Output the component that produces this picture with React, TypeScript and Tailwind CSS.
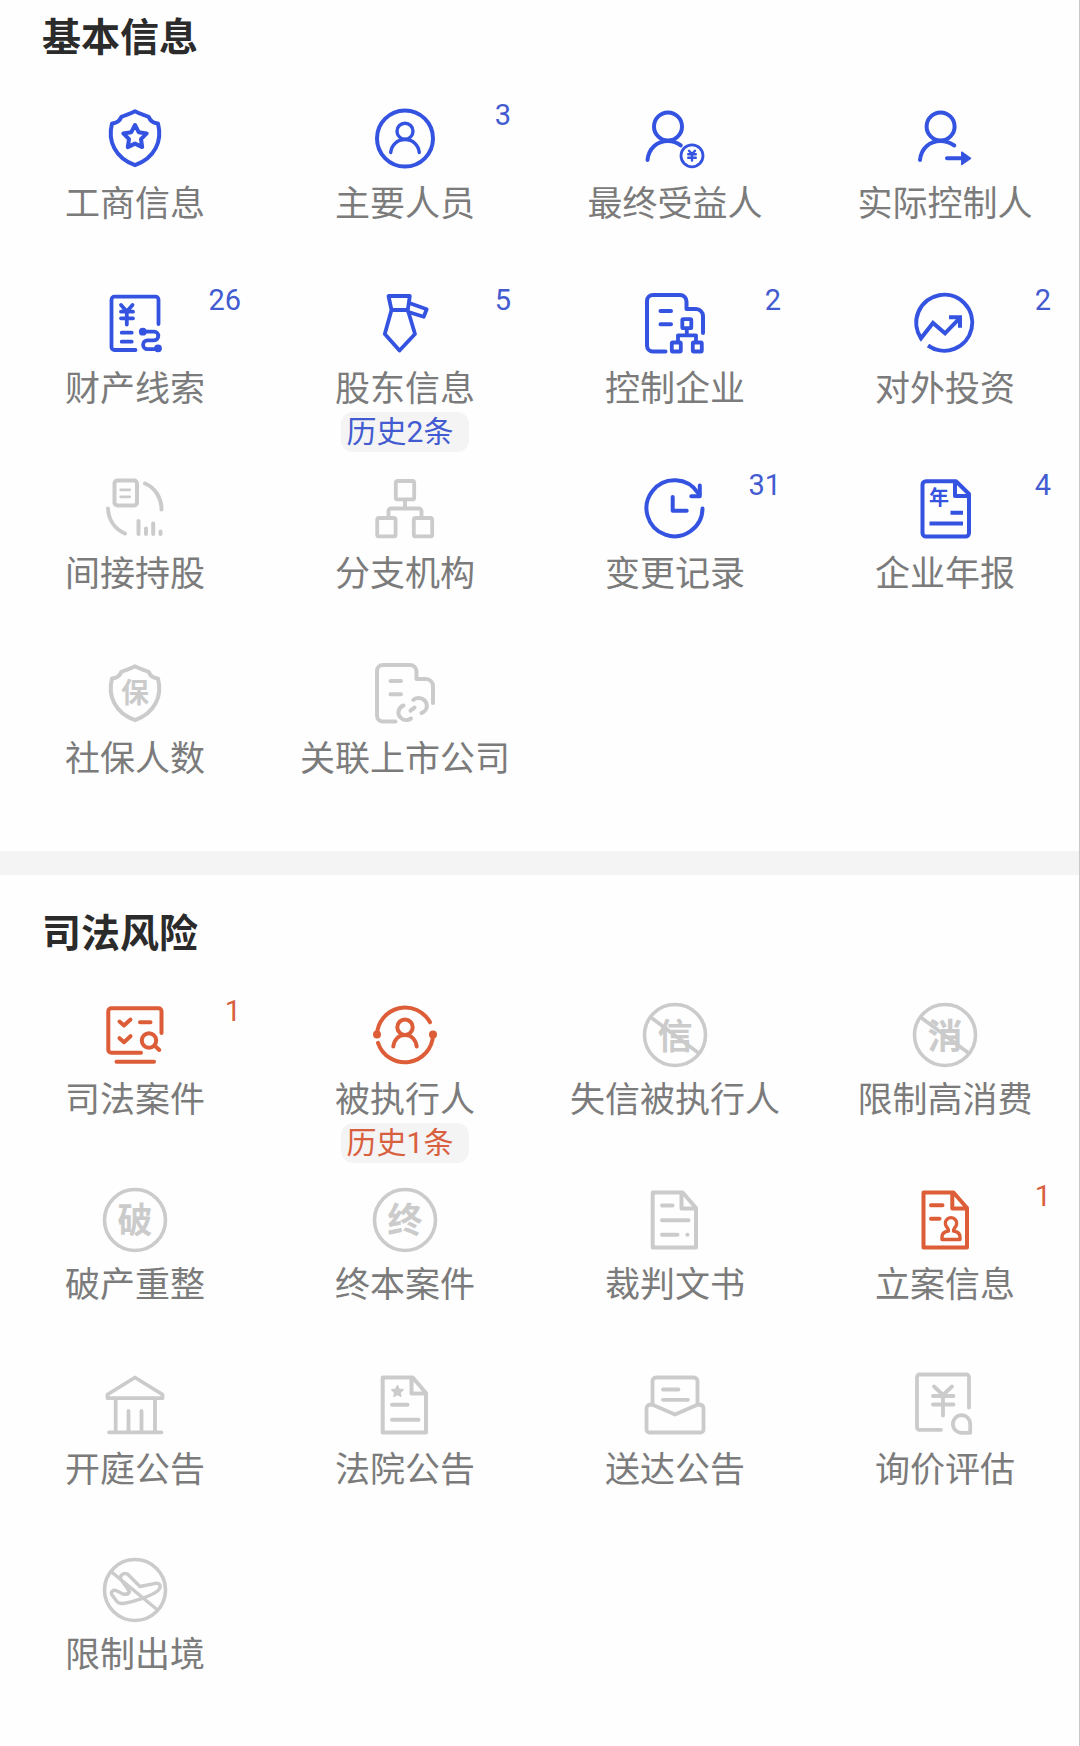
import type { ReactNode } from 'react'

type Tone = 'blue' | 'red' | 'off'

type Item = {
  label: string
  icon: ReactNode
  tone: Tone
  count?: number
  history?: string
}

const iconColor: Record<Tone, string> = {
  blue: 'text-[#3453e0]',
  red: 'text-[#dc5d38]',
  off: 'text-[#cbcbcb]',
}

const textColor: Record<Tone, string> = {
  blue: 'text-[#435bd0]',
  red: 'text-[#d9603f]',
  off: 'text-[#7b7b7b]',
}

/* Shared shapes */

function Glyph({ char, y, size }: { char: string; y: number; size: number }) {
  return (
    <text x="32" y={y} fontSize={size} fontWeight="700" textAnchor="middle" fill="currentColor" stroke="none">
      {char}
    </text>
  )
}

const shield = (
  <path d="M32 4.2c-5 2.6-9 3.6-13.600 5.600-1.700 4.400-4.400 6.400-9.400 6.600C4.500 34 12 51 32 58.200 52 51 59.500 34 55 16.400c-5-.2-7.700-2.200-9.400-6.600C41 7.800 37 6.800 32 4.200z" />
)

const ring = <circle cx="32" cy="32" r="30.500" strokeWidth="3.600" />

const slash = <path d="M8 14.500 55.500 50" strokeWidth="3.600" />

const notchedDoc = (
  <>
    <path d="M22.500 59.500H10a6 6 0 0 1-6-6V9a6 6 0 0 1 6-6h27a6.500 6.500 0 0 1 6.500 6.500V17H53a7 7 0 0 1 7 7v17" />
    <path d="M17.500 19H28M17.500 32.300H28" />
  </>
)

const foldedDoc = <path d="M9.700 4.500h30L53 20v39.500H9.700zM38.500 5v15.500H52" />

/* Icons, one per entry */

const icons = {
  business: (
    <>
      {shield}
      <path d="m32 18 3.700 7.200 8 1.200-5.700 5.700 1.200 8L32 36.600l-7.200 3.500 1.200-8-5.700-5.700 8-1.200z" />
    </>
  ),
  staff: (
    <>
      <circle cx="32" cy="31.500" r="28" />
      <circle cx="32" cy="24.200" r="8" strokeWidth="3.400" />
      <path d="M17.700 45.500c.8-7.500 6.500-13 14.300-13s13.500 5.500 14.300 13" strokeWidth="3.400" />
    </>
  ),
  beneficiary: (
    <>
      <circle cx="25" cy="19.500" r="14" />
      <path d="M4.500 53C5.500 41.500 14 34 25 34c5 0 9 1.500 12.800 4.300" />
      <circle cx="49" cy="48.800" r="11" strokeWidth="2.800" />
      <path d="m46 43.800 3 3.200 3-3.200M45.200 47.300h7.600M45.200 50.800h7.600M49 47.300v6.200" strokeWidth="2.400" />
    </>
  ),
  controller: (
    <>
      <circle cx="27.600" cy="19.500" r="14" />
      <path d="M7 53c1-11.500 9.500-19 20.600-19 5 0 9.500 1.700 13.700 4.500" />
      <path d="M34 51.300h14" />
      <path d="M48.800 45.200 57.500 51.300l-8.700 6.200z" fill="currentColor" strokeWidth="1.500" />
    </>
  ),
  property: (
    <g strokeWidth="3.800">
      <path d="M32.500 58H11.500a3 3 0 0 1-3-3V7.700a3 3 0 0 1 3-3h41a3 3 0 0 1 3 3V32" />
      <path d="m18 13 5.800 6.500L29.500 13M18 19.700h12M18 26.300h12M23.800 20v12.500M18.700 40.700h10M18.700 49.700h10" />
      <path d="M39.800 39.700H51a4.300 4.300 0 0 1 0 8.600h-6.500a4.400 4.400 0 0 0 0 8.800H54" />
      <circle cx="39.800" cy="39.700" r="2" fill="currentColor" />
      <circle cx="55" cy="56.300" r="2" fill="currentColor" />
    </g>
  ),
  shareholder: (
    <g strokeWidth="3.800">
      <path d="M15.500 4h21.300l-2 14H18.500zM18.500 18l-6.700 24 14.700 16.500L42 42l-7.200-24" />
      <path d="m36.300 11 17.400 6.300-3 7.400L35.500 20" />
    </g>
  ),
  subsidiary: (
    <>
      {notchedDoc}
      <g strokeWidth="3.800">
        <rect x="39.300" y="27.200" width="9" height="9" rx="1" />
        <rect x="28.800" y="50.500" width="9" height="9" rx="1" />
        <rect x="49.800" y="50.500" width="9" height="9" rx="1" />
        <path d="M43.800 37v6.300M35 49.500v-6.200h18v6.200" />
      </g>
    </>
  ),
  investment: (
    <g strokeLinecap="butt" strokeLinejoin="miter">
      <path d="M15 53.500A28 28 0 1 0 8 46.300L20 31l12 10.300 14.500-15" />
      <path d="M36 25.300h11v10.500" />
    </g>
  ),
  indirect: (
    <>
      <rect x="11.500" y="3.500" width="22.500" height="25" rx="3" />
      <path d="M17.700 12.800h9M17.700 19.800h9" strokeWidth="2.800" />
      <path d="M42 6.500C52 10.500 58.500 21 58.500 32.500M5 31.500c.5 11.500 7 20.500 17 25" />
      <path d="M35.500 44v13M43 51.500V57M50.200 46.500V57M57.500 54.500V57" />
    </>
  ),
  branch: (
    <g strokeWidth="3.800">
      <rect x="22.800" y="4" width="18.400" height="18.400" rx="2" />
      <rect x="4.200" y="41" width="18.400" height="18.400" rx="2" />
      <rect x="40.800" y="41" width="18.400" height="18.400" rx="2" />
      <path d="M32 23v8M15.500 40v-6a2.500 2.500 0 0 1 2.500-2.500h28a2.500 2.500 0 0 1 2.500 2.500v6" />
    </g>
  ),
  changes: (
    <>
      <path d="M59.500 31.500A28 28 0 1 1 55 16" />
      <path d="M56.800 8.500v10.700h-8.500" />
      <path d="M29.700 20v13.700h14" />
    </>
  ),
  report: (
    <g strokeLinecap="butt">
      <path d="M43 4.200H13a3.500 3.500 0 0 0-3.500 3.500V56a3.500 3.500 0 0 0 3.500 3.500h39.500A3.500 3.500 0 0 0 56 56V17zM42 5v14H55" />
      <path d="M37.500 35.800H50M16.500 46.500H50" />
      <text x="26" y="28" fontSize="20" fontWeight="700" textAnchor="middle" fill="currentColor" stroke="none">
        年
      </text>
    </g>
  ),
  insurance: (
    <>
      {shield}
      <Glyph char="保" y={41} size={28} />
    </>
  ),
  listed: (
    <>
      {notchedDoc}
      <path d="M30.500 43.500c-5 1.800-6.500 8-3.500 11.500s7.500 4 11 1.500M40.300 37.800c5-3.500 11.500-1.500 13.200 3.700 1.200 4-.8 8-5 9.500M37.500 48.700l4-3" />
    </>
  ),
  cases: (
    <>
      <path d="M38 49.800H8.300A3 3 0 0 1 5.300 46.800V8.200a3 3 0 0 1 3-3h47.200a3 3 0 0 1 3 3V30" />
      <path d="M13.500 58.800H51M37 19.300h10.500M16.500 18.500l4.500 4 6.500-6M16.500 35.200l4.500 4 6.500-6" />
      <circle cx="46" cy="37.500" r="7.200" />
      <path d="m51.500 42.500 4.800 4.500" />
    </>
  ),
  executed: (
    <>
      <path d="M4 31.500A28.200 28.200 0 0 1 57 19.300M5 39.800A28.200 28.200 0 0 0 60 31.500" />
      <circle cx="4" cy="31.500" r="4" fill="currentColor" stroke="none" />
      <circle cx="60" cy="31.500" r="4" fill="currentColor" stroke="none" />
      <circle cx="32" cy="24.200" r="7.700" />
      <path d="M20.300 43.500c1-7 5.500-11.500 11.700-11.500s10.700 4.500 11.700 11.500" />
    </>
  ),
  dishonest: (
    <>
      {ring}
      {slash}
      <Glyph char="信" y={46} size={35} />
    </>
  ),
  spending: (
    <>
      {ring}
      {slash}
      <Glyph char="消" y={46} size={35} />
    </>
  ),
  bankrupt: (
    <>
      {ring}
      <Glyph char="破" y={45} size={35} />
    </>
  ),
  closed: (
    <>
      {ring}
      <Glyph char="终" y={45} size={35} />
    </>
  ),
  judgment: (
    <>
      {foldedDoc}
      <path d="M19 17.500h10.500M19 32.300h26.500M19 46.700h15.500M44.300 46.700h.2" />
    </>
  ),
  filing: (
    <>
      <path d="M10.500 4.500h30L54 20v39.500H10.500zM39.300 5v15.500H53" />
      <path d="M18 17.300h11.500M18 30.700h8.500" />
      <path
        d="M35.500 43c0-2-1.200-3-2.200-4.700a5.600 5.600 0 1 1 9.400 0c-1 1.700-2.200 2.700-2.200 4.700 4.500.7 6.500 2.500 6.500 6v2.500H29V49c0-3.500 2-5.300 6.500-6z"
        strokeWidth="3.400"
      />
    </>
  ),
  court: (
    <g strokeWidth="3.800">
      <path d="M32 4.500 4.500 21.500v3.700h55v-3.700z" />
      <path d="M12.700 26v32M52 26v32M25.500 38v20M38.500 38v20M6 59.300h52.500" />
    </g>
  ),
  courtNotice: (
    <>
      {foldedDoc}
      <path d="M19 31.800h15.500M19 46.800h26.500" />
      <path d="m24.400 12.500 1.800 3.700 4 .5-3 2.800.8 4-3.600-2-3.600 2 .8-4-3-2.800 4-.5z" fill="currentColor" strokeWidth="1.200" />
    </>
  ),
  delivery: (
    <g strokeWidth="3.800">
      <path d="M9.500 31V8a3.500 3.500 0 0 1 3.500-3.500h38A3.500 3.500 0 0 1 54.500 8v23" />
      <path d="M9 31.500c-3.500 0-5.500 1-5.500 4v21a3 3 0 0 0 3 3h51a3 3 0 0 0 3-3v-21c0-3-2-4-5.500-4L32 41.500z" />
      <path d="M20 16.500h15.500M20 26.800h25" />
    </g>
  ),
  inquiry: (
    <g strokeWidth="3.800">
      <path d="M28 56.800H6.500a2.500 2.500 0 0 1-2.500-2.500V4a2.500 2.500 0 0 1 2.500-2.500h47A2.500 2.500 0 0 1 56 4v30.500" />
      <path d="m21 13.500 9 8.500 9-8.500M20 23h20.500M20 31.500h20.500M30 23v19.500" />
      <path d="M48.700 42.200a8.800 8.800 0 0 0 0 17.600h8.500v-9a8.600 8.600 0 0 0-8.500-8.600z" />
    </g>
  ),
  exit: (
    <>
      {ring}
      <path d="M8 13.500 54.300 51.700" strokeWidth="3.400" />
      <path
        d="M26.500 33.500 18 21.500c-2-3.500 2-7.500 6.500-5.500L37 28.500l15.500-3.200c5-.5 6.500 4 2 7.700C48 38 32 43.500 20.500 45.500c-3 .3-5 0-6.500-2L8.700 36.500c-1.200-2.500 1.300-5 4.300-4l7 3.500c3 .7 5.500 0 6.500-2.500z"
        strokeWidth="3.400"
      />
    </>
  ),
}

const basicItems: Item[] = [
  { label: '工商信息', icon: icons.business, tone: 'blue' },
  { label: '主要人员', icon: icons.staff, tone: 'blue', count: 3 },
  { label: '最终受益人', icon: icons.beneficiary, tone: 'blue' },
  { label: '实际控制人', icon: icons.controller, tone: 'blue' },
  { label: '财产线索', icon: icons.property, tone: 'blue', count: 26 },
  { label: '股东信息', icon: icons.shareholder, tone: 'blue', count: 5, history: '历史2条' },
  { label: '控制企业', icon: icons.subsidiary, tone: 'blue', count: 2 },
  { label: '对外投资', icon: icons.investment, tone: 'blue', count: 2 },
  { label: '间接持股', icon: icons.indirect, tone: 'off' },
  { label: '分支机构', icon: icons.branch, tone: 'off' },
  { label: '变更记录', icon: icons.changes, tone: 'blue', count: 31 },
  { label: '企业年报', icon: icons.report, tone: 'blue', count: 4 },
  { label: '社保人数', icon: icons.insurance, tone: 'off' },
  { label: '关联上市公司', icon: icons.listed, tone: 'off' },
]

const judicialItems: Item[] = [
  { label: '司法案件', icon: icons.cases, tone: 'red', count: 1 },
  { label: '被执行人', icon: icons.executed, tone: 'red', history: '历史1条' },
  { label: '失信被执行人', icon: icons.dishonest, tone: 'off' },
  { label: '限制高消费', icon: icons.spending, tone: 'off' },
  { label: '破产重整', icon: icons.bankrupt, tone: 'off' },
  { label: '终本案件', icon: icons.closed, tone: 'off' },
  { label: '裁判文书', icon: icons.judgment, tone: 'off' },
  { label: '立案信息', icon: icons.filing, tone: 'red', count: 1 },
  { label: '开庭公告', icon: icons.court, tone: 'off' },
  { label: '法院公告', icon: icons.courtNotice, tone: 'off' },
  { label: '送达公告', icon: icons.delivery, tone: 'off' },
  { label: '询价评估', icon: icons.inquiry, tone: 'off' },
  { label: '限制出境', icon: icons.exit, tone: 'off' },
]

function Entry({ item }: { item: Item }) {
  return (
    <button type="button" className="relative flex min-h-[185px] flex-col items-center whitespace-nowrap">
      <svg
        viewBox="0 0 64 64"
        className={`size-16 overflow-visible ${iconColor[item.tone]}`}
        fill="none"
        stroke="currentColor"
        strokeWidth="4"
        strokeLinecap="round"
        strokeLinejoin="round"
        aria-hidden="true"
      >
        {item.icon}
      </svg>
      {item.count !== undefined && (
        <span
          className={`absolute -top-2 right-[29px] font-[Roboto,'Noto_Sans_CJK_SC',sans-serif] text-[29px] leading-8 ${textColor[item.tone]}`}
        >
          {item.count}
        </span>
      )}
      <span className="mt-1.5 text-[35px] leading-12 text-[#7b7b7b]">{item.label}</span>
      {item.history && (
        <span
          className={`mt-0.5 rounded-xl bg-[#f4f4f4] pr-4 pl-[6px] font-[Roboto,'Noto_Sans_CJK_SC',sans-serif] text-[30px] leading-10 ${textColor[item.tone]}`}
        >
          {item.history}
        </span>
      )}
    </button>
  )
}

function Grid({ title, items }: { title: string; items: Item[] }) {
  return (
    <>
      <h2 className="pl-[42px] text-[39px] leading-12 font-bold text-[#2b2b2b]">{title}</h2>
      <div className="mt-[49px] grid grid-cols-4">
        {items.map((item) => (
          <Entry key={item.label} item={item} />
        ))}
      </div>
    </>
  )
}

export default function App() {
  return (
    <main className="min-h-screen bg-[#fefefe] font-['Noto_Sans_CJK_SC',sans-serif] shadow-[inset_-1px_0_0_#c8c8c8]">
      {/* Company basics */}
      <section className="pt-2.5 pb-1">
        <Grid title="基本信息" items={basicItems} />
      </section>

      <div className="mr-px h-6 bg-[#f4f4f4]" />

      {/* Judicial risk */}
      <section className="pt-[31px]">
        <Grid title="司法风险" items={judicialItems} />
      </section>
    </main>
  )
}
